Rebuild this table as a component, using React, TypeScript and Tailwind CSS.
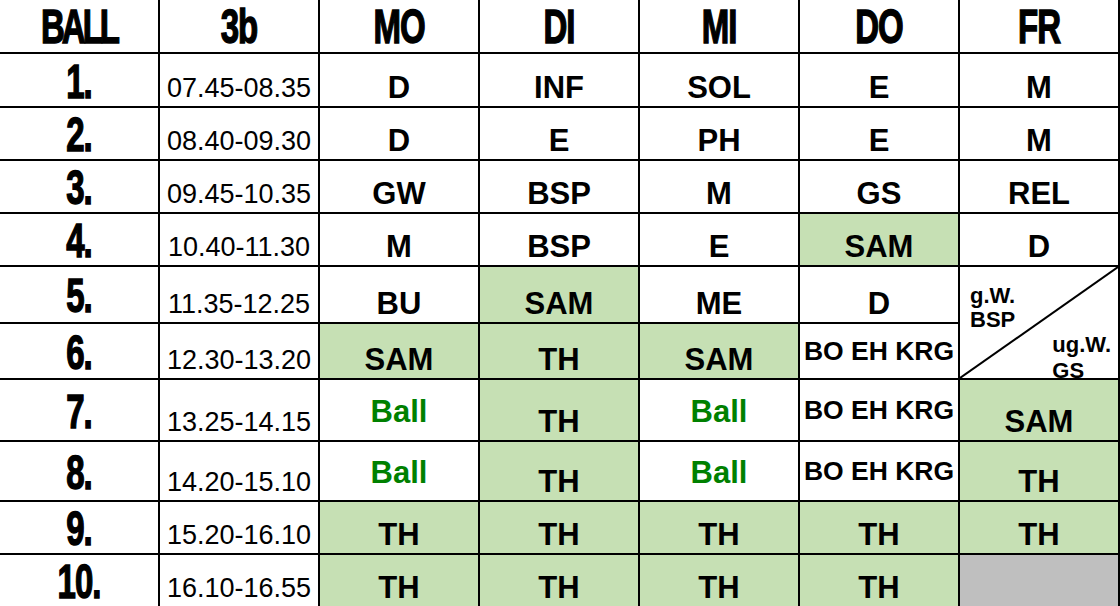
import React from "react";

type Cell = {
  text?: string;
  fill?: "green" | "gray";
  kind?: "ball" | "small" | "diag" | "skip";
};

const G = (text: string): Cell => ({ text, fill: "green" });
const P = (text: string): Cell => ({ text });
const BALL: Cell = { text: "Ball", kind: "ball" };
const KRG: Cell = { text: "BO EH KRG", kind: "small" };

const days = ["MO", "DI", "MI", "DO", "FR"];

const rows: { n: string; time: string; cells: Cell[] }[] = [
  { n: "1.", time: "07.45-08.35", cells: [P("D"), P("INF"), P("SOL"), P("E"), P("M")] },
  { n: "2.", time: "08.40-09.30", cells: [P("D"), P("E"), P("PH"), P("E"), P("M")] },
  { n: "3.", time: "09.45-10.35", cells: [P("GW"), P("BSP"), P("M"), P("GS"), P("REL")] },
  { n: "4.", time: "10.40-11.30", cells: [P("M"), P("BSP"), P("E"), G("SAM"), P("D")] },
  { n: "5.", time: "11.35-12.25", cells: [P("BU"), G("SAM"), P("ME"), P("D"), { kind: "diag" }] },
  { n: "6.", time: "12.30-13.20", cells: [G("SAM"), G("TH"), G("SAM"), KRG, { kind: "skip" }] },
  { n: "7.", time: "13.25-14.15", cells: [BALL, G("TH"), BALL, KRG, G("SAM")] },
  { n: "8.", time: "14.20-15.10", cells: [BALL, G("TH"), BALL, KRG, G("TH")] },
  { n: "9.", time: "15.20-16.10", cells: [G("TH"), G("TH"), G("TH"), G("TH"), G("TH")] },
  { n: "10.", time: "16.10-16.55", cells: [G("TH"), G("TH"), G("TH"), G("TH"), { fill: "gray" }] },
];

const font = "font-['Liberation_Sans',Arial,sans-serif]";

function Heavy({ children, tight }: { children: React.ReactNode; tight?: boolean }) {
  // stand-in for Impact: bold, stretched tall, a bit of stroke
  return (
    <span
      className={`inline-block scale-y-[1.43] text-[33px] leading-none font-bold [-webkit-text-stroke:1px_black] ${
        tight ? "tracking-[-3px]" : "tracking-[-1px]"
      }`}
    >
      {children}
    </span>
  );
}

function DiagCell() {
  return (
    <div className="relative row-span-2 flex flex-col overflow-hidden bg-white text-[22px] font-bold">
      <svg className="absolute inset-0 h-full w-full" preserveAspectRatio="none" viewBox="0 0 100 100">
        <line x1="0" y1="100" x2="100" y2="0" stroke="black" strokeWidth="2" vectorEffect="non-scaling-stroke" />
      </svg>
      <div className="relative pl-[10px] pt-[17px] leading-[24px]">
        <div>g.W.</div>
        <div>BSP</div>
      </div>
      <div className="relative ml-auto pr-[7px] leading-[26px]">
        <div>ug.W.</div>
        <div>GS</div>
      </div>
    </div>
  );
}

function DataCell({ cell }: { cell: Cell }) {
  if (cell.kind === "skip") return null;
  if (cell.kind === "diag") return <DiagCell />;
  const bg =
    cell.fill === "green" ? "bg-[#c6e0b4]" : cell.fill === "gray" ? "bg-[#bfbfbf]" : "bg-white";
  if (cell.kind === "ball") {
    return (
      <div className={`flex items-center justify-center pt-[2px] ${bg} text-[31px] leading-none font-bold text-[#008000]`}>
        {cell.text}
      </div>
    );
  }
  if (cell.kind === "small") {
    return (
      <div className={`flex items-center justify-center ${bg} text-[26.5px] leading-none font-bold whitespace-nowrap`}>
        {cell.text}
      </div>
    );
  }
  return (
    <div className={`flex items-end justify-center pb-[3px] ${bg} text-[31px] leading-none font-bold`}>
      {cell.text}
    </div>
  );
}

export default function App() {
  return (
    <div
      className={`grid w-[1120px] grid-cols-[repeat(7,158px)] grid-rows-[52px_52px_51px_51px_51px_55px_54px_60px_58px_51px_51px] gap-[2px] bg-black pr-[2px] text-black ${font}`}
    >
      <div className="flex items-center justify-center bg-white">
        <Heavy tight>BALL</Heavy>
      </div>
      <div className="flex items-center justify-center bg-white">
        <Heavy>3b</Heavy>
      </div>
      {days.map((d) => (
        <div key={d} className="flex items-center justify-center bg-white">
          <Heavy>{d}</Heavy>
        </div>
      ))}

      {rows.map((r) => (
        <React.Fragment key={r.n}>
          <div className="flex items-center justify-center bg-white pt-[2px]">
            <Heavy>{r.n}</Heavy>
          </div>
          <div className="flex items-end justify-center bg-white pb-[4px] text-[27px] leading-none">
            {r.time}
          </div>
          {r.cells.map((c, i) => (
            <DataCell key={i} cell={c} />
          ))}
        </React.Fragment>
      ))}
    </div>
  );
}
